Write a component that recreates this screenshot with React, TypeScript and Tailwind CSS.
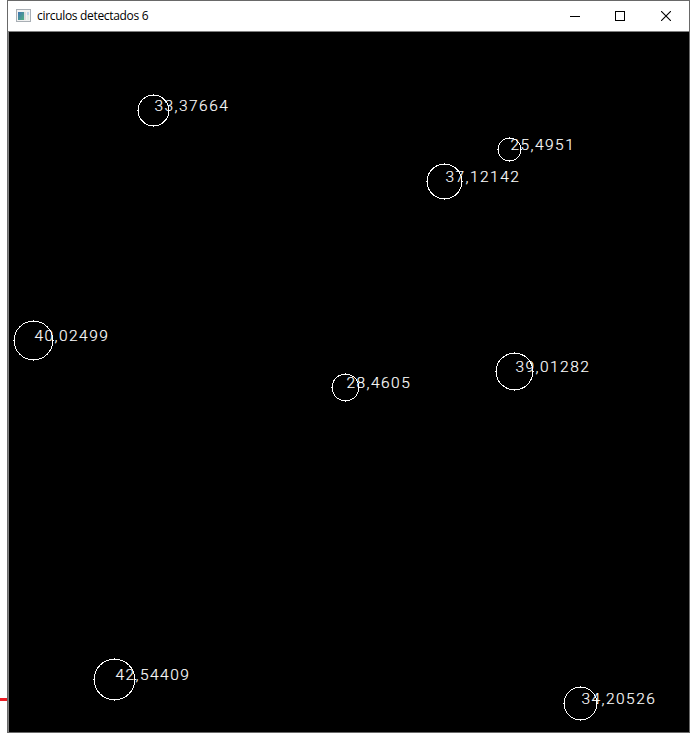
type Detection = { x: number; y: number; r: number; label: string };

const detections: Detection[] = [
  { x: 144, y: 78, r: 16, label: "33,37664" },
  { x: 500, y: 117, r: 12, label: "25,4951" },
  { x: 435, y: 149, r: 18, label: "37,12142" },
  { x: 24, y: 308, r: 20, label: "40,02499" },
  { x: 336, y: 355, r: 14, label: "28,4605" },
  { x: 505, y: 339, r: 19, label: "39,01282" },
  { x: 105, y: 647, r: 21, label: "42,54409" },
  { x: 571, y: 671, r: 17, label: "34,20526" },
];

function AppIcon() {
  return (
    <svg width="16" height="14" viewBox="0 0 16 14" shapeRendering="crispEdges">
      <defs>
        <linearGradient id="screen" x1="0" y1="0" x2="1" y2="1">
          <stop offset="0" stopColor="#3f74b4" />
          <stop offset="1" stopColor="#51b080" />
        </linearGradient>
      </defs>
      <rect x="0.5" y="0.5" width="14" height="12" fill="#f2f2f2" stroke="#a9afb5" />
      <rect x="2" y="3" width="6" height="8" fill="url(#screen)" />
      <rect x="8" y="3" width="2" height="8" fill="#dcdcde" />
      <rect x="11" y="3" width="2" height="3" fill="#bfd4e8" />
      <rect x="11" y="6" width="2" height="5" fill="#e3ece4" />
    </svg>
  );
}

function TitleBar() {
  return (
    <header className="flex h-[30px] shrink-0 items-center bg-white pl-2">
      <AppIcon />
      <h1 className="ml-[5px] grow text-[12px] leading-4 tracking-[-0.32px] whitespace-nowrap text-black font-['Open_Sans','Noto_Sans',sans-serif]">
        circulos detectados 6
      </h1>
      <div className="flex">
        <button aria-label="Minimizar" className="flex w-[45px] justify-center">
          <svg width="10" height="11" shapeRendering="crispEdges">
            <path d="M0 5.5H10" stroke="#000" />
          </svg>
        </button>
        <button aria-label="Maximizar" className="flex w-[46px] justify-center">
          <svg width="10" height="10" shapeRendering="crispEdges">
            <rect x="0.5" y="0.5" width="9" height="9" fill="none" stroke="#000" />
          </svg>
        </button>
        <button aria-label="Cerrar" className="flex w-[46px] justify-center">
          <svg width="10" height="10">
            <path d="M0 0L10 10M10 0L0 10" stroke="#000" strokeWidth="1.1" />
          </svg>
        </button>
      </div>
    </header>
  );
}

// One-pixel outline with a single-pixel tip at each compass point.
function Ring({ x, y, r }: { x: number; y: number; r: number }) {
  return (
    <g fill="#fff">
      <circle cx={x + 0.5} cy={y + 0.5} r={r - 0.6} fill="none" stroke="#fff" />
      <rect x={x - r} y={y} width="1" height="1" />
      <rect x={x + r} y={y} width="1" height="1" />
      <rect x={x} y={y - r} width="1" height="1" />
      <rect x={x} y={y + r} width="1" height="1" />
    </g>
  );
}

export default function App() {
  return (
    <div className="flex h-[741px] w-[696px] overflow-hidden bg-white">
      <div className="flex w-[7px] shrink-0 items-end pb-10">
        <div className="h-[3px] w-full bg-[#ed1c24]" />
      </div>
      <main className="flex h-[733px] w-[683px] shrink-0 flex-col border border-[#696969] bg-white">
        <TitleBar />
        <section className="relative grow overflow-hidden border-t border-l border-[#808080] bg-black">
          <svg className="block" width="680" height="700" shapeRendering="crispEdges">
            {detections.map((d) => (
              <Ring key={d.label} x={d.x} y={d.y} r={d.r} />
            ))}
          </svg>
          {detections.map((d) => (
            <span
              key={d.label}
              className="absolute text-[15.5px] leading-[18px] font-light tracking-[1.45px] whitespace-nowrap text-white [-webkit-text-stroke:0.15px_#fff] font-['Roboto',sans-serif]"
              style={{ left: d.x + 1.5, top: d.y - 13 }}
            >
              {d.label}
            </span>
          ))}
        </section>
      </main>
    </div>
  );
}
